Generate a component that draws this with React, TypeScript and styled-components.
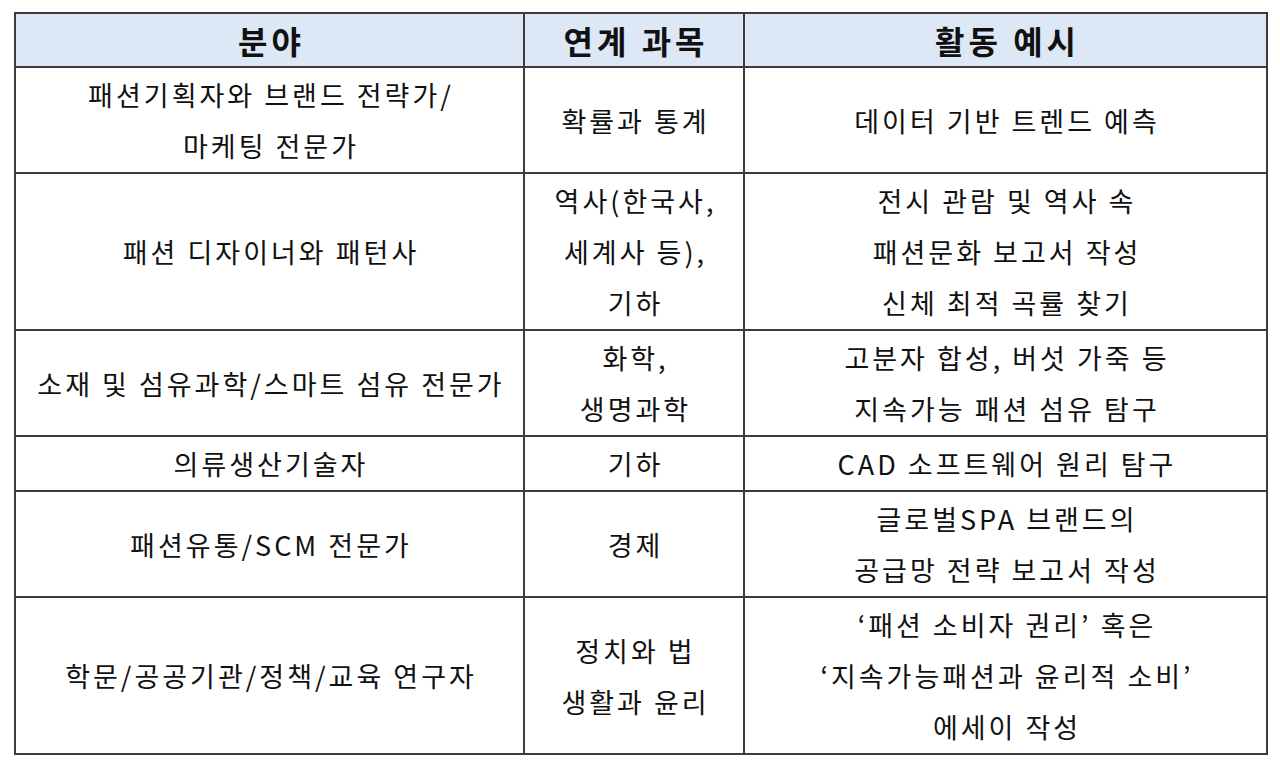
import React from "react";
import styled, { createGlobalStyle } from "styled-components";

const GlobalStyle = createGlobalStyle`
  html, body {
    margin: 0;
    padding: 0;
    background: #ffffff;
  }
  body {
    font-family: "Noto Sans CJK KR", "Noto Sans", sans-serif;
    color: #111111;
  }
`;

const Page = styled.div`
  padding: 12px 14px 0 14px;
`;

const Table = styled.table`
  width: 1252px;
  border-collapse: collapse;
  table-layout: fixed;
  border: 2px solid #3c3c3c;
`;

const HeadCell = styled.th`
  background-color: #dce8f6;
  border: 2px solid #3c3c3c;
  height: 52px;
  padding: 0 0 0 4px;
  font-size: 32px;
  font-weight: 700;
  letter-spacing: 4px;
  line-height: 52px;
  text-align: center;
`;

const Cell = styled.td`
  border: 2px solid #3c3c3c;
  padding: 1px 0 1px 3px;
  font-size: 27px;
  font-weight: 400;
  letter-spacing: 3px;
  line-height: 51px;
  text-align: center;
  vertical-align: middle;
  white-space: nowrap;
`;

interface Row {
  field: string[];
  subject: string[];
  activity: string[];
}

const rows: Row[] = [
  {
    field: ["패션기획자와 브랜드 전략가/", "마케팅 전문가"],
    subject: ["확률과 통계"],
    activity: ["데이터 기반 트렌드 예측"],
  },
  {
    field: ["패션 디자이너와 패턴사"],
    subject: ["역사(한국사,", "세계사 등),", "기하"],
    activity: ["전시 관람 및 역사 속", "패션문화 보고서 작성", "신체 최적 곡률 찾기"],
  },
  {
    field: ["소재 및 섬유과학/스마트 섬유 전문가"],
    subject: ["화학,", "생명과학"],
    activity: ["고분자 합성, 버섯 가죽 등", "지속가능 패션 섬유 탐구"],
  },
  {
    field: ["의류생산기술자"],
    subject: ["기하"],
    activity: ["CAD 소프트웨어 원리 탐구"],
  },
  {
    field: ["패션유통/SCM 전문가"],
    subject: ["경제"],
    activity: ["글로벌SPA 브랜드의", "공급망 전략 보고서 작성"],
  },
  {
    field: ["학문/공공기관/정책/교육 연구자"],
    subject: ["정치와 법", "생활과 윤리"],
    activity: ["‘패션 소비자 권리’ 혹은", "‘지속가능패션과 윤리적 소비’", "에세이 작성"],
  },
];

function Lines({ lines }: { lines: string[] }) {
  return (
    <>
      {lines.map((line, i) => (
        <React.Fragment key={i}>
          {i > 0 && <br />}
          {line}
        </React.Fragment>
      ))}
    </>
  );
}

function App() {
  return (
    <>
      <GlobalStyle />
      <Page>
        <Table>
          <colgroup>
            <col style={{ width: "509px" }} />
            <col style={{ width: "220px" }} />
            <col style={{ width: "523px" }} />
          </colgroup>
          <thead>
            <tr>
              <HeadCell>분야</HeadCell>
              <HeadCell>연계 과목</HeadCell>
              <HeadCell>활동 예시</HeadCell>
            </tr>
          </thead>
          <tbody>
            {rows.map((row, i) => (
              <tr key={i}>
                <Cell>
                  <Lines lines={row.field} />
                </Cell>
                <Cell>
                  <Lines lines={row.subject} />
                </Cell>
                <Cell>
                  <Lines lines={row.activity} />
                </Cell>
              </tr>
            ))}
          </tbody>
        </Table>
      </Page>
    </>
  );
}

export default App;
